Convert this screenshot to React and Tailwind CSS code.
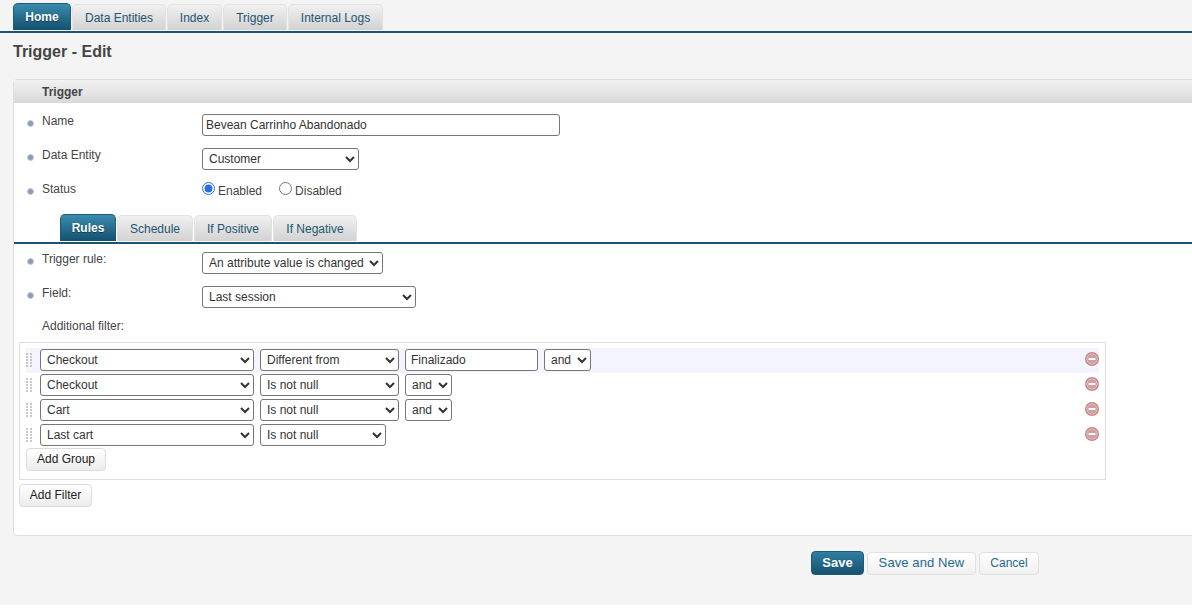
const font = "font-['Liberation_Sans',Arial,sans-serif]";

const Bullet = () => (
  <span className="mt-[4px] w-[7px] h-[7px] rounded-full bg-[#8b9bb5] border border-[#c3cad6] shrink-0" />
);

const Tab = ({ label, active, w }) => (
  <div
    className={
      active
        ? "h-[27px] flex items-center justify-center rounded-t-[5px] border border-[#1c5a78] border-b-0 bg-gradient-to-b from-[#3a8cb0] to-[#14506f] text-white font-bold text-[12px] [text-shadow:0_1px_1px_#0b3a50]"
        : "h-[26px] flex items-center justify-center rounded-t-[5px] border border-[#e2e2e2] border-b-0 bg-gradient-to-b from-[#f1f1f1] to-[#d2d2d2] text-[#1d5570] text-[12px]"
    }
    style={{ width: w }}
  >
    {label}
  </div>
);

const Field = ({ label, top, children }) => (
  <div className={"flex items-start pl-[13px] " + top}>
    <div className="w-[175px] flex items-center shrink-0 h-[14px]">
      <Bullet />
      <span className="ml-[8px] text-[12px] text-[#444]">{label}</span>
    </div>
    {children}
  </div>
);

const Select = ({ value, w, options }) => (
  <select
    defaultValue={value}
    className="h-[22px] bg-white border border-[#767676] rounded-[3px] text-[12px] text-[#333] pl-[2px] shrink-0"
    style={{ width: w }}
  >
    {(options || [value]).map((o) => (
      <option key={o}>{o}</option>
    ))}
  </select>
);

const Grip = () => (
  <svg width="8" height="15" viewBox="0 0 8 15" className="shrink-0">
    {[1, 4, 7, 10, 13].map((y) =>
      [0, 4].map((x) => <rect key={x + "-" + y} x={x} y={y} width="2" height="2" fill="#c8c8c8" />),
    )}
  </svg>
);

const Remove = () => (
  <svg width="14" height="14" viewBox="0 0 14 14" className="shrink-0 mt-[3px]">
    <circle cx="7" cy="7" r="7" fill="#c98484" />
    <circle cx="7" cy="7" r="5.2" fill="#d0a0a0" stroke="#e2c4c4" strokeWidth="0.9" />
    <rect x="3.6" y="6" width="6.8" height="2" fill="#fff" />
  </svg>
);

const FilterRow = ({ first, second, secondW, input, and, highlight }) => (
  <div className={"flex items-start h-[25px] pt-[1px] " + (highlight ? "bg-[#f3f4fd]" : "")}>
    <div className="w-[14px] pt-[3px] flex shrink-0">
      <Grip />
    </div>
    <Select value={first} w={214} />
    <div className="w-[6px] shrink-0" />
    <Select value={second} w={secondW} />
    {input && (
      <input
        defaultValue={input}
        className="ml-[6px] w-[133px] h-[22px] bg-white border border-[#767676] rounded-[3px] text-[12px] text-[#333] px-[5px] shrink-0"
      />
    )}
    {and && (
      <div className="ml-[6px] flex">
        <Select value="and" w={47} />
      </div>
    )}
    <div className="flex-1" />
    <Remove />
  </div>
);

const GrayBtn = ({ label, w }) => (
  <button
    className="h-[23px] pb-[2px] rounded-[4px] border border-[#dcdcdc] bg-gradient-to-b from-white to-[#ececec] text-[12px] text-[#222]"
    style={{ width: w }}
  >
    {label}
  </button>
);

export default function App() {
  return (
    <div className="bg-white h-[612px] w-[1192px] overflow-hidden">
      <div className={"w-[1192px] h-[605px] overflow-hidden bg-[#f4f4f4] " + font}>
        <div className="h-[33px] pb-[1px] pl-[13px] flex items-end gap-[1px] border-b-2 border-[#1a5470]">
          <Tab label="Home" active w={58} />
          <Tab label="Data Entities" w={94} />
          <Tab label="Index" w={55} />
          <Tab label="Trigger" w={64} />
          <Tab label="Internal Logs" w={95} />
        </div>
        <h1 className="mt-[9px] ml-[13px] text-[16px] leading-[19px] font-bold text-[#444]">Trigger - Edit</h1>

        <div className="mt-[18px] ml-[13px] w-[1200px] h-[457px] border border-[#dedede] rounded-tl-[4px] rounded-bl-[4px] bg-white">
          <div className="h-[23px] flex items-center pl-[28px] bg-gradient-to-b from-[#f2f2f2] to-[#d8d8d8] text-[12px] font-bold text-[#444]">
            Trigger
          </div>

          <Field label="Name" top="pt-[11px]">
            <input
              defaultValue="Bevean Carrinho Abandonado"
              className="w-[358px] h-[22px] bg-white border border-[#767676] rounded-[3px] text-[12px] text-[#333] px-[3px]"
            />
          </Field>
          <Field label="Data Entity" top="pt-[12px]">
            <Select value="Customer" w={157} />
          </Field>
          <Field label="Status" top="pt-[12px]">
            <div className="flex items-start h-[16px] text-[12px] leading-[14px] text-[#444]">
              <input type="radio" name="status" defaultChecked className="w-[13px] h-[13px] m-0 accent-[#2a6fe8]" />
              <span className="ml-[3px] mt-[2px]">Enabled</span>
              <input type="radio" name="status" className="w-[13px] h-[13px] m-0 ml-[17px]" />
              <span className="ml-[3px] mt-[2px]">Disabled</span>
            </div>
          </Field>

          <div className="mt-[16px] h-[30px] pb-[1px] pl-[46px] flex items-end gap-[1px] border-b-2 border-[#1a5470]">
            <Tab label="Rules" active w={56} />
            <Tab label="Schedule" w={76} />
            <Tab label="If Positive" w={78} />
            <Tab label="If Negative" w={84} />
          </div>

          <Field label="Trigger rule:" top="pt-[8px]">
            <Select value="An attribute value is changed" w={181} />
          </Field>
          <Field label="Field:" top="pt-[12px]">
            <Select value="Last session" w={214} />
          </Field>
          <div className="mt-[11px] ml-[28px] text-[12px] leading-[14px] text-[#444]">Additional filter:</div>

          <div className="mt-[9px] ml-[5px] w-[1087px] h-[138px] border border-[#dedede] pt-[5px] px-[6px]">
            <FilterRow first="Checkout" second="Different from" secondW={139} input="Finalizado" and highlight />
            <FilterRow first="Checkout" second="Is not null" secondW={139} and />
            <FilterRow first="Cart" second="Is not null" secondW={139} and />
            <FilterRow first="Last cart" second="Is not null" secondW={126} />
            <div className="flex">
              <GrayBtn label="Add Group" w={80} />
            </div>
          </div>
          <div className="flex mt-[4px] ml-[5px]">
            <GrayBtn label="Add Filter" w={73} />
          </div>
        </div>

        <div className="mt-[15px] pl-[811px] flex items-center gap-[3px]">
          <button className="w-[53px] h-[24px] rounded-[4px] border border-[#1c5a78] bg-gradient-to-b from-[#2f7fa3] to-[#17506e] text-white text-[13px] font-bold">
            Save
          </button>
          <button className="w-[109px] h-[23px] rounded-[4px] border border-[#e0e0e0] bg-gradient-to-b from-white to-[#f0f0f0] text-[#1f6a8c] text-[13px] tracking-[0.1px]">
            Save and New
          </button>
          <button className="w-[60px] h-[23px] rounded-[4px] border border-[#e0e0e0] bg-gradient-to-b from-white to-[#f0f0f0] text-[#1f6a8c] text-[12px]">
            Cancel
          </button>
        </div>
      </div>
    </div>
  );
}
